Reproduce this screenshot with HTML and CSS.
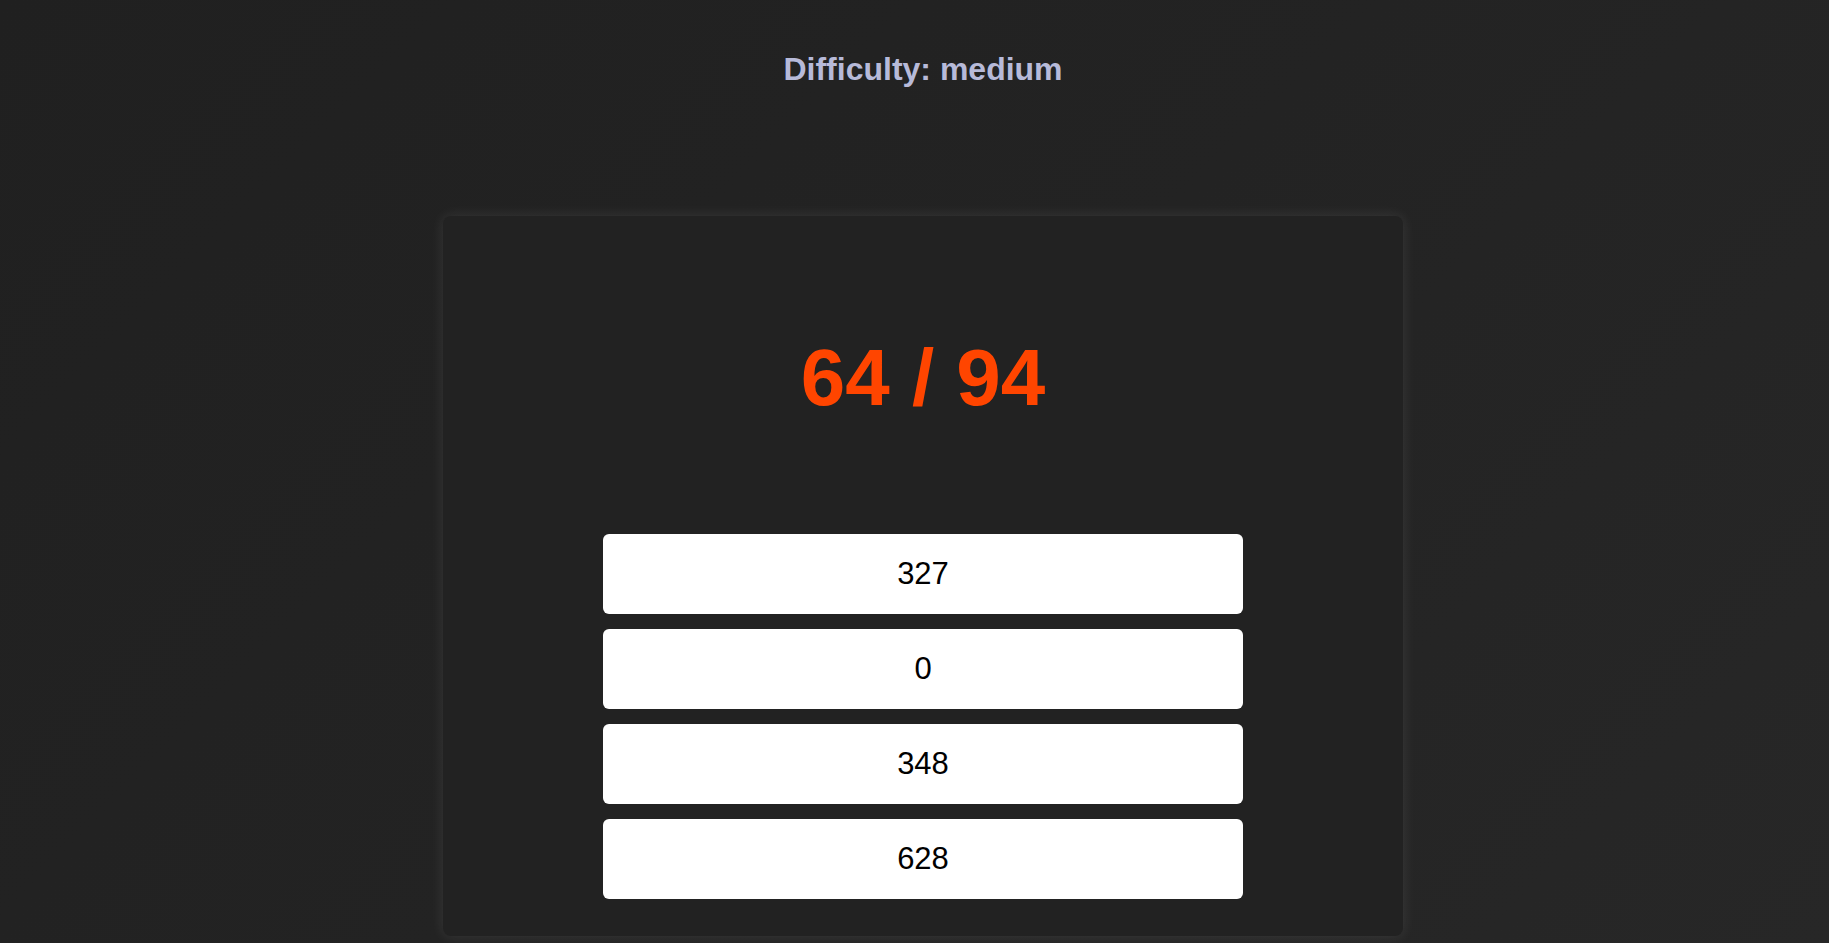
FILE: index.html
```html
<!DOCTYPE html>
<html lang="en">
<head>
<meta charset="utf-8">
<title>Quiz</title>
<link rel="stylesheet" href="styles.css">
</head>
<body>
<div class="page">
  <h1 class="difficulty">Difficulty: medium</h1>
  <div class="card">
    <div class="question">64 / 94</div>
    <div class="answers">
      <button class="answer">327</button>
      <button class="answer">0</button>
      <button class="answer">348</button>
      <button class="answer">628</button>
    </div>
  </div>
</div>
</body>
</html>
```

FILE: styles.css
```css
html, body {
  margin: 0;
  padding: 0;
  height: 100%;
}
body {
  background: linear-gradient(135deg, #202020 0%, #232323 50%, #272727 100%);
  font-family: "Liberation Sans", Arial, sans-serif;
  overflow: hidden;
}
.page {
  padding-left: 17px;
  display: flex;
  flex-direction: column;
  align-items: center;
}
.difficulty {
  margin: 51px 0 0 0;
  font-size: 32px;
  line-height: 37px;
  font-weight: bold;
  color: #b7bad9;
}
.card {
  margin-top: 128px;
  width: 960px;
  height: 720px;
  box-sizing: border-box;
  padding: 116px 0 0 0;
  background: #222222;
  border-radius: 8px;
  box-shadow: 0 0 14px rgba(255, 255, 255, 0.1);
  display: flex;
  flex-direction: column;
  align-items: center;
}
.question {
  font-size: 80px;
  line-height: 92px;
  font-weight: bold;
  color: #ff4500;
}
.answers {
  margin-top: 110px;
  display: flex;
  flex-direction: column;
  gap: 15px;
  width: 640px;
}
.answer {
  height: 80px;
  border: none;
  border-radius: 6px;
  background: #ffffff;
  color: #000000;
  font-family: "Liberation Sans", Arial, sans-serif;
  font-size: 31px;
  padding: 0;
}
```
